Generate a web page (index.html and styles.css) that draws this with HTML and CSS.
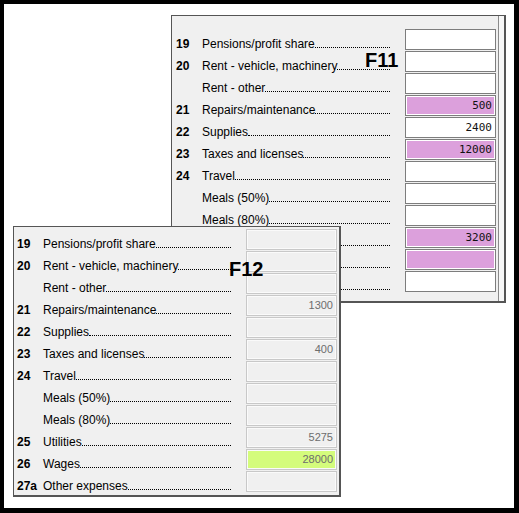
FILE: index.html
```html
<!DOCTYPE html>
<html lang="en">
<head>
    <meta charset="UTF-8">
    <title>Schedule C expenses - F11 / F12</title>
    <link rel="stylesheet" href="styles.css">
</head>
<body>

<div class="frame">

    <div class="form form-f11">
        <div class="rows">
            <div class="row"><span class="num">19</span><span class="label">Pensions/profit share<i></i></span><span class="box"></span></div>
            <div class="row"><span class="num">20</span><span class="label">Rent - vehicle, machinery<i></i></span><span class="box"></span></div>
            <div class="row"><span class="num"></span><span class="label">Rent - other<i></i></span><span class="box"></span></div>
            <div class="row"><span class="num">21</span><span class="label">Repairs/maintenance<i></i></span><span class="box pink">500</span></div>
            <div class="row"><span class="num">22</span><span class="label">Supplies<i></i></span><span class="box">2400</span></div>
            <div class="row"><span class="num">23</span><span class="label">Taxes and licenses<i></i></span><span class="box pink">12000</span></div>
            <div class="row"><span class="num">24</span><span class="label">Travel<i></i></span><span class="box"></span></div>
            <div class="row"><span class="num"></span><span class="label">Meals (50%)<i></i></span><span class="box"></span></div>
            <div class="row"><span class="num"></span><span class="label">Meals (80%)<i></i></span><span class="box"></span></div>
            <div class="row"><span class="num">25</span><span class="label">Utilities<i></i></span><span class="box pink">3200</span></div>
            <div class="row"><span class="num">26</span><span class="label">Wages<i></i></span><span class="box pink"></span></div>
            <div class="row"><span class="num">27a</span><span class="label">Other expenses<i></i></span><span class="box"></span></div>
        </div>
        <div class="track"></div>
        <div class="tag">F11</div>
    </div>

    <div class="form form-f12">
        <div class="rows">
            <div class="row"><span class="num">19</span><span class="label">Pensions/profit share<i></i></span><span class="box"></span></div>
            <div class="row"><span class="num">20</span><span class="label">Rent - vehicle, machinery<i></i></span><span class="box"></span></div>
            <div class="row"><span class="num"></span><span class="label">Rent - other<i></i></span><span class="box"></span></div>
            <div class="row"><span class="num">21</span><span class="label">Repairs/maintenance<i></i></span><span class="box">1300</span></div>
            <div class="row"><span class="num">22</span><span class="label">Supplies<i></i></span><span class="box"></span></div>
            <div class="row"><span class="num">23</span><span class="label">Taxes and licenses<i></i></span><span class="box">400</span></div>
            <div class="row"><span class="num">24</span><span class="label">Travel<i></i></span><span class="box"></span></div>
            <div class="row"><span class="num"></span><span class="label">Meals (50%)<i></i></span><span class="box"></span></div>
            <div class="row"><span class="num"></span><span class="label">Meals (80%)<i></i></span><span class="box"></span></div>
            <div class="row"><span class="num">25</span><span class="label">Utilities<i></i></span><span class="box">5275</span></div>
            <div class="row"><span class="num">26</span><span class="label">Wages<i></i></span><span class="box green">28000</span></div>
            <div class="row"><span class="num">27a</span><span class="label">Other expenses<i></i></span><span class="box"></span></div>
        </div>
        <div class="tag">F12</div>
    </div>

</div>

</body>
</html>
```

FILE: styles.css
```css
html, body {
    margin: 0;
    padding: 0;
    background: #000;
}
.frame {
    position: relative;
    width: 510px;
    height: 504px;
    border-style: solid;
    border-color: #000;
    border-width: 4px 5px 5px 4px;
    background: #fff;
    overflow: hidden;
    font-family: "Liberation Sans", Arial, sans-serif;
    font-size: 12px;
    color: #000;
}

/* the two overlapping form windows */
.form {
    position: absolute;
    display: flex;
    background: #f0f0f0;
    border-style: solid;
    border-color: #555;
    border-width: 1px 2px 2px 1px;
}
.form-f11 {
    left: 167px;
    top: 11px;
    padding: 13px 0 9px 4px;
}
.form-f12 {
    left: 9px;
    top: 222px;
    padding: 2px 2px 3px 3px;
}
.rows {
    display: flex;
    flex-direction: column;
    gap: 1px;
}
.row {
    display: flex;
    height: 21px;
}
.num {
    width: 26px;
    font-weight: bold;
    line-height: 14px;
    padding-top: 8px;
}
.label {
    width: 188px;
    display: flex;
    align-items: baseline;
    line-height: 14px;
    padding-top: 8px;
    margin-right: 15px;
    white-space: nowrap;
}
.label i {
    flex: 1;
    height: 10px;
    border-bottom: 1px dotted #000;
}
.box {
    box-sizing: border-box;
    width: 91px;
    height: 21px;
    padding: 0 3px;
    text-align: right;
    line-height: 19px;
}
.form-f11 .box {
    background: #fff;
    border: 1px solid #7d7d7d;
    box-shadow: inset 0 0 0 1px #fff;
    font-family: "DejaVu Sans Mono", monospace;
    font-size: 11px;
    color: #111;
}
.form-f11 .box.pink {
    background: #dca0dc;
}
.form-f12 .box {
    background: #f0f0f0;
    border: 1px solid #c8c8c8;
    box-shadow: inset 0 0 0 1px #fafafa;
    font-size: 11px;
    color: #6d6d6d;
}
.form-f12 .box.green {
    background: #d4fc7c;
}
.track {
    width: 5px;
    margin: -13px 0 -9px 2px;
    border-left: 1px solid #8a8a8a;
    background: #f7f7f7;
}
.tag {
    position: absolute;
    font-size: 20px;
    font-weight: bold;
    line-height: 20px;
}
.form-f11 .tag {
    left: 193px;
    top: 34px;
}
.form-f12 .tag {
    left: 215px;
    top: 32px;
}
```
